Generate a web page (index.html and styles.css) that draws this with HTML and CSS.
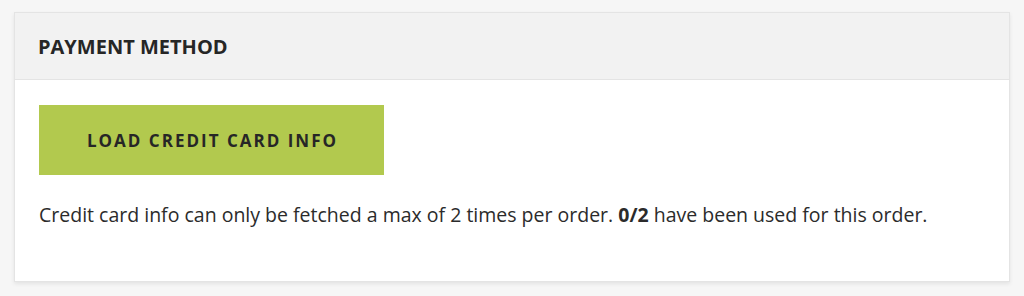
FILE: index.html
```html
<!DOCTYPE html>
<html>
<head>
<meta charset="utf-8">
<link rel="stylesheet" href="styles.css">
</head>
<body>
<div class="card">
  <div class="card-header"><h2 class="title">PAYMENT METHOD</h2></div>
  <div class="card-body">
    <button class="btn">LOAD CREDIT CARD INFO</button>
    <p class="note">Credit card info can only be fetched a max of 2 times per order. <strong>0/2</strong> have been used for this order.</p>
  </div>
</div>
</body>
</html>
```
FILE: styles.css
```css
html, body { margin: 0; padding: 0; }
body {
  background: #f6f6f6;
  padding: 12px 14px;
  font-family: "Open Sans", "Noto Sans", sans-serif;
  color: #2b2b2b;
}
.card {
  background: #fff;
  border: 1px solid #e4e4e4;
  box-shadow: 0 2px 4px rgba(0,0,0,0.08);
}
.card-header {
  background: #f2f2f2;
  border-bottom: 1px solid #e4e4e4;
  height: 66px;
  display: flex;
  align-items: center;
  padding: 0 23px;
}
.title {
  margin: 0;
  font-size: 20px;
  font-weight: 700;
  color: #262626;
}
.card-body {
  padding: 25px 24px 53px;
}
.btn {
  display: block;
  width: 345px;
  height: 70px;
  background: #b2c94e;
  border: none;
  font-family: inherit;
  font-size: 17px;
  font-weight: 700;
  letter-spacing: 2px;
  color: #262626;
  padding: 0 0 0 2px;
}
.note {
  margin: 27px 0 0;
  font-size: 19.5px;
  line-height: 26px;
}
.note strong { font-weight: 700; }
```
